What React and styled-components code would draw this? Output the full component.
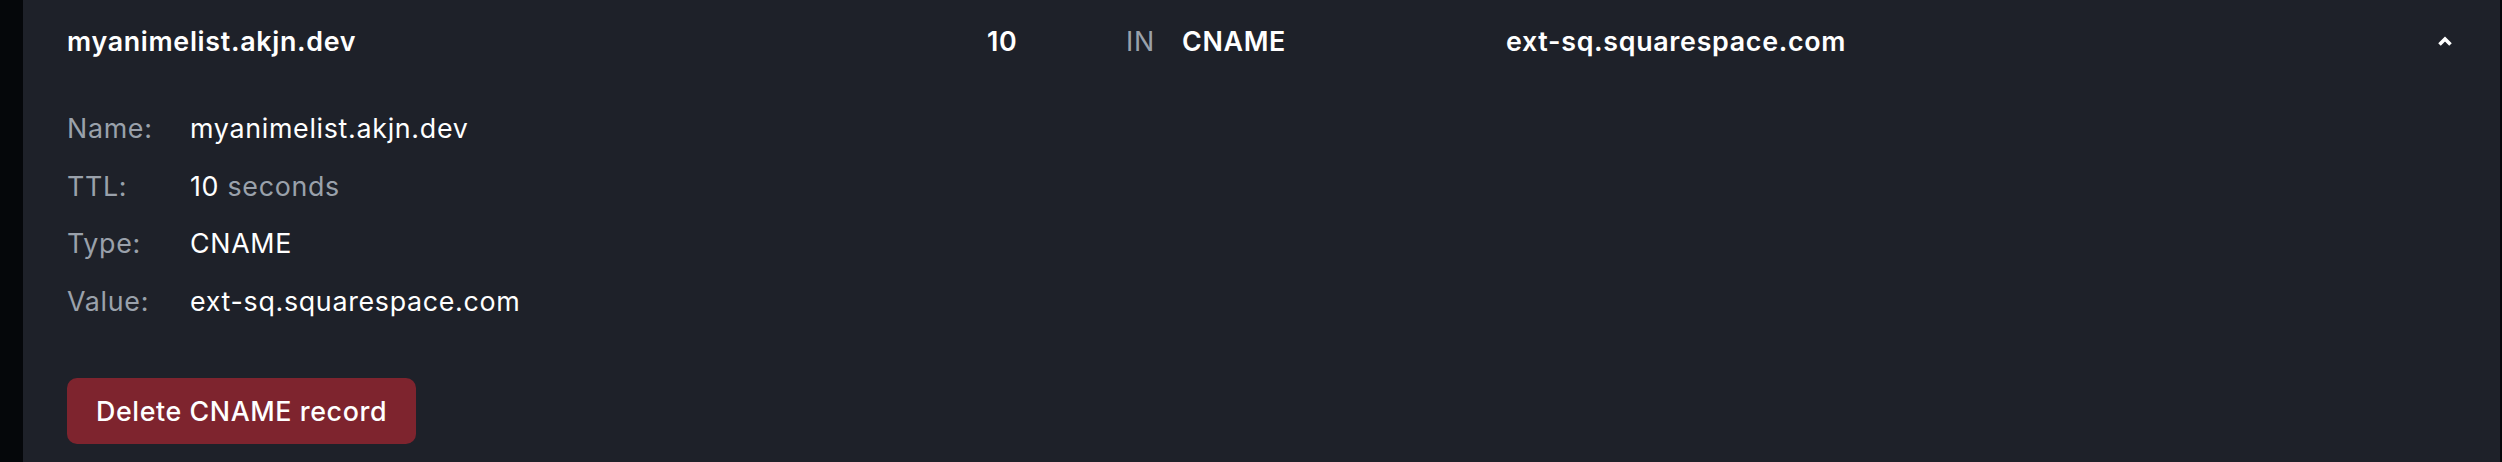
import React from 'react';
import styled, { createGlobalStyle } from 'styled-components';

const GlobalStyle = createGlobalStyle`
  html, body {
    margin: 0;
    padding: 0;
    background: #05070a;
  }
  body {
    font-family: Inter, "Noto Sans", "Liberation Sans", sans-serif;
    -webkit-font-smoothing: antialiased;
  }
`;

const Page = styled.div`
  height: 462px;
  padding: 0 2px 0 23px;
  box-sizing: border-box;
`;

const RecordPanel = styled.div`
  height: 100%;
  background: #1e2129;
  color: #f5f6f7;
  font-size: 26.8px;
  letter-spacing: 0.7px;
  overflow: hidden;
`;

const HeaderRow = styled.div`
  display: grid;
  grid-template-columns: 920px 139px 56px 324px 1fr auto;
  align-items: center;
  padding: 22px 47px 0 44px;
  line-height: 38px;
`;

const Cell = styled.div`
  font-weight: ${p => (p.muted ? 400 : 600)};
  color: ${p => (p.muted ? '#9aa1ab' : '#ffffff')};
  white-space: nowrap;
`;

const Chevron = styled.button`
  background: transparent;
  border: none;
  padding: 0;
  display: flex;
  align-items: center;
  cursor: pointer;
  color: #ffffff;
`;

const Body = styled.div`
  padding: 49px 44px 0 44px;
`;

const Details = styled.dl`
  display: grid;
  grid-template-columns: 123px 1fr;
  row-gap: 19.2px;
  margin: 0;
  line-height: 38.4px;
`;

const Label = styled.dt`
  color: #9aa1ab;
`;

const Value = styled.dd`
  margin: 0;
  color: #ffffff;
`;

const Unit = styled.span`
  color: #9aa1ab;
`;

const DeleteButton = styled.button`
  display: block;
  margin-top: 58px;
  height: 66px;
  padding: 0 29px;
  border: none;
  border-radius: 10px;
  background: #7e242e;
  color: #ffffff;
  font-family: inherit;
  font-size: 26.8px;
  font-weight: 500;
  letter-spacing: 0.6px;
  cursor: pointer;
`;

const record = {
  name: 'myanimelist.akjn.dev',
  ttl: 10,
  cls: 'IN',
  type: 'CNAME',
  value: 'ext-sq.squarespace.com',
};

export default function App() {
  return (
    <>
      <GlobalStyle />
      <Page>
        <RecordPanel>
          <HeaderRow>
            <Cell>{record.name}</Cell>
            <Cell>{record.ttl}</Cell>
            <Cell muted>{record.cls}</Cell>
            <Cell>{record.type}</Cell>
            <Cell>{record.value}</Cell>
            <Chevron aria-label="Collapse">
              <svg width="16" height="12" viewBox="0 0 16 12">
                <path
                  d="M2.5 9.5 L8 4 L13.5 9.5"
                  fill="none"
                  stroke="currentColor"
                  strokeWidth="3.6"
                  strokeLinejoin="miter"
                />
              </svg>
            </Chevron>
          </HeaderRow>
          <Body>
            <Details>
              <Label>Name:</Label>
              <Value>{record.name}</Value>
              <Label>TTL:</Label>
              <Value>
                {record.ttl} <Unit>seconds</Unit>
              </Value>
              <Label>Type:</Label>
              <Value>{record.type}</Value>
              <Label>Value:</Label>
              <Value>{record.value}</Value>
            </Details>
            <DeleteButton>Delete {record.type} record</DeleteButton>
          </Body>
        </RecordPanel>
      </Page>
    </>
  );
}
